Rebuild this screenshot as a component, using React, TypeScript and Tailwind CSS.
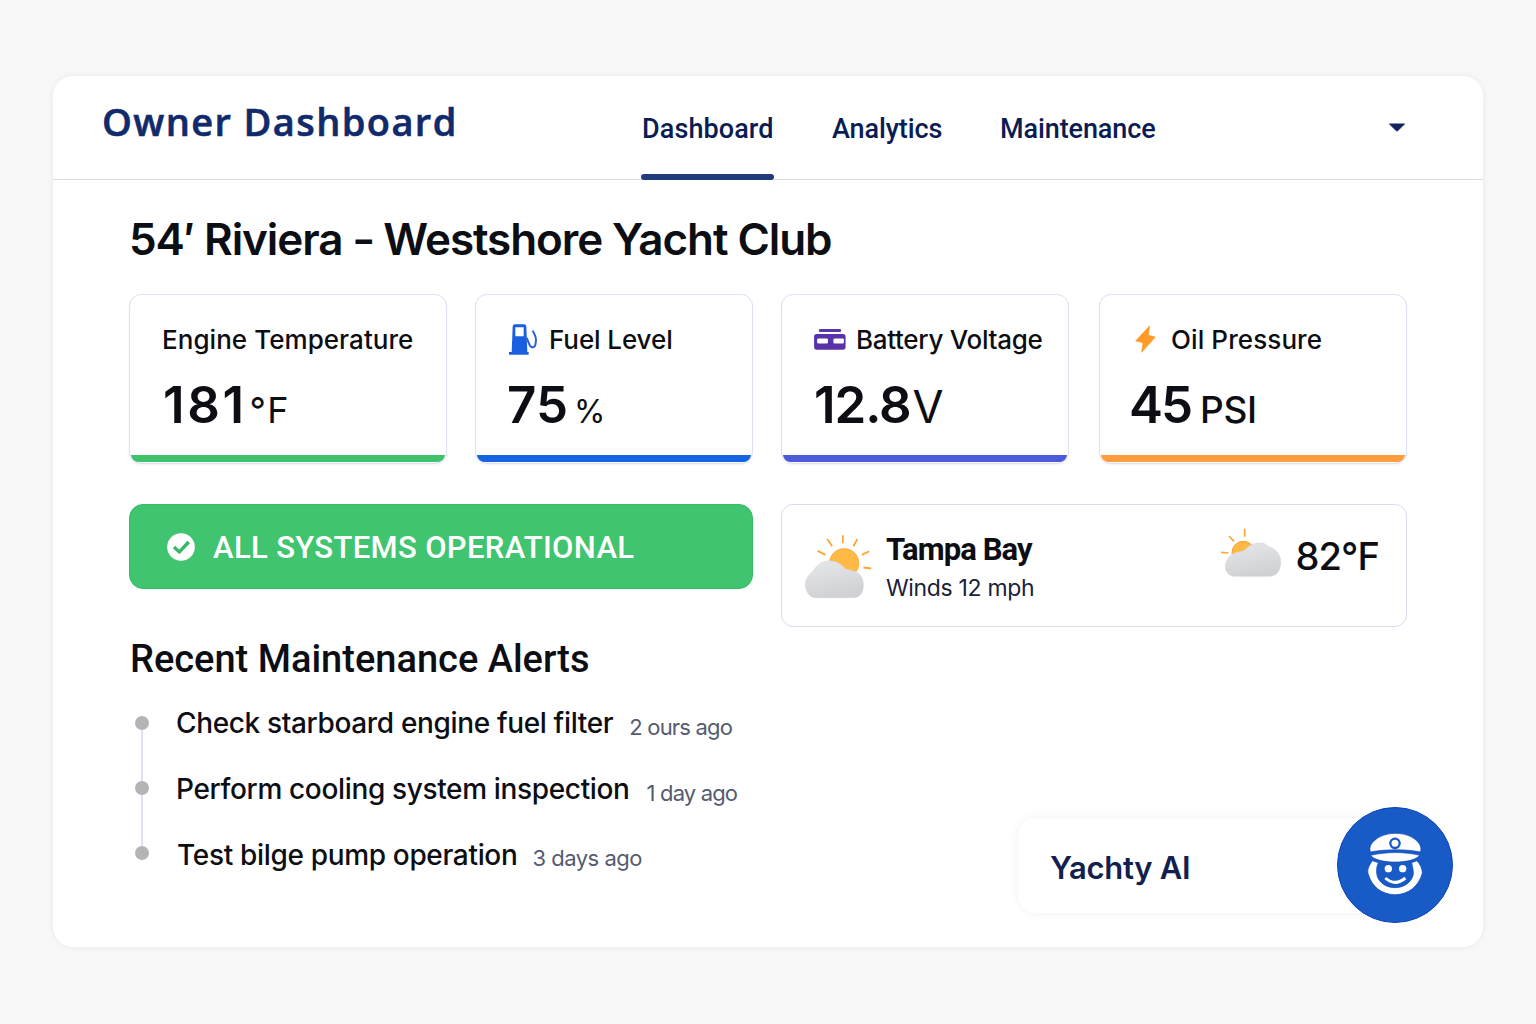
import React from "react";

const FuelIcon = () => (
  <svg className="h-[31px] w-7 shrink-0" viewBox="132 119 84 93" fill="none">
    <path fillRule="evenodd" fill="#1a5fdf" d="M143 127q0-7 7-7h27q7 0 7 7l3 76h4v8h-59v-8h8zM151 129v27h25v-27z" />
    <path d="M185 161C191 171 192 188 202 189C212 190 212 178 213 166C213 154 207 148 203 139" stroke="#2a63d8" strokeWidth="6" />
  </svg>
);

const BatteryIcon = () => (
  <svg className="h-[21px] w-8 shrink-0" viewBox="117 128 94 62">
    <rect x="131" y="128" width="66" height="9" rx="4" fill="#5636a8" />
    <path fillRule="evenodd" fill="#5931ab" d="M125 143h77q8 0 8 8v30q0 8-8 8h-77q-8 0-8-8v-30q0-8 8-8zM130 156q-4 0-4 4v7q0 4 4 4h24q4 0 4-4v-7q0-4-4-4zM178 156q-4 0-4 4v7q0 4 4 4h23q4 0 4-4v-7q0-4-4-4z" />
  </svg>
);

const BoltIcon = () => (
  <svg className="h-7 w-[21px] shrink-0" viewBox="134 121 63 84">
    <path fill="#ff9a26" stroke="#ff9a26" strokeWidth="2" strokeLinejoin="round" d="M178 123L136 169L158 174L154 203L195 157L174 152Z" />
  </svg>
);

const CloudGradient = ({ id }: { id: string }) => (
  <defs>
    <linearGradient id={id} x1="0.3" y1="0" x2="0.6" y2="1">
      <stop offset="0" stopColor="#e5e6e8" />
      <stop offset="1" stopColor="#cfd0d3" />
    </linearGradient>
  </defs>
);

const SunBehindCloud = () => (
  <svg className="h-[65px] w-[69px] shrink-0" viewBox="72 100 208 196">
    <CloudGradient id="cloudA" />
    <circle cx="193" cy="188" r="44.5" fill="#ffb947" stroke="#fba62c" strokeWidth="2" />
    <path d="M189 104v24M142 115l15 22M233 115l-12 22M113 151l24 12M269 152l-23 11M251 201l24 3" stroke="#fca635" strokeWidth="5.5" />
    <path fill="url(#cloudA)" stroke="#d2d3d7" strokeWidth="1.5" d="M108 292C88 292 76 272 76 252C76 232 90 222 100 210C115 190 130 181 150 181C172 181 185 193 195 203C205 210 225 208 238 220C248 230 251 243 251 255C251 277 240 292 220 292Z" />
  </svg>
);

const CloudWithSun = () => (
  <svg className="h-[50px] w-[62px] shrink-0" viewBox="120 82 186 150">
    <CloudGradient id="cloudB" />
    <circle cx="190" cy="156" r="34" fill="#ffb947" stroke="#fba02a" strokeWidth="3" />
    <path d="M194 84v24M147 106l15 16M123 155l22 2" stroke="#fca635" strokeWidth="5" />
    <path fill="url(#cloudB)" stroke="#cfd0d6" strokeWidth="1.5" d="M166 227C146 227 136 212 136 198C136 182 146 166 162 158C172 152 186 156 197 146C207 135 220 127 242 127C252 126 258 131 263 137C285 142 302 160 302 184C302 210 290 227 266 227Z" />
  </svg>
);

const CheckBadge = () => (
  <svg className="size-7 shrink-0" viewBox="0 0 84 84">
    <circle cx="42" cy="42" r="41.5" fill="#fff" />
    <path d="M21 42l16 15 28-30" fill="none" stroke="#36b866" strokeWidth="10" />
  </svg>
);

const CaptainIcon = () => (
  <svg className="size-[116px]" viewBox="51 36 348 348">
    <circle cx="225" cy="210" r="172.5" fill="#195bc6" stroke="#0d43bd" strokeWidth="3" />
    <g fill="#fff" stroke="#0d47bd" strokeWidth="2">
      <path d="M151 171Q147 160 152 151C165 128 195 115 226 115C260 115 289 129 300 150Q305 160 302 171C255 162 200 162 151 171Z" />
      <path d="M152 181C200 170 255 170 299 181C280 208 170 208 152 181Z" />
      <path d="M157 197C145 215 142 225 144 235C155 275 185 299 225 299C265 299 295 275 307 235C307 220 300 208 291 197L275 203C280 225 282 235 278 245C270 265 250 278 225 278C200 278 180 265 172 245C168 230 169 215 175 203Z" />
    </g>
    <circle cx="225" cy="145" r="14" fill="#fff" stroke="#195bc6" strokeWidth="7" />
    <circle cx="205" cy="221" r="11" fill="#fff" />
    <circle cx="248" cy="221" r="11" fill="#fff" />
    <path d="M196 249Q225 275 256 249" fill="none" stroke="#fff" strokeWidth="9" />
  </svg>
);

type MetricProps = {
  label: string;
  labelClass: string;
  value: string;
  valueClass: string;
  unit: string;
  unitClass: string;
  cardClass: string;
  barClass: string;
  icon?: React.ReactNode;
};

const Metric = ({ label, labelClass, value, valueClass, unit, unitClass, cardClass, barClass, icon }: MetricProps) => (
  <section className={`flex h-[170px] shrink-0 flex-col overflow-hidden rounded-xl border border-[#dde1f2] bg-white px-px pb-px shadow-[0_1px_2px_rgba(30,40,90,0.06)] ${cardClass}`}>
    <div className="mt-7 flex h-8 items-center whitespace-nowrap">
      {icon}
      <h2 className={`relative top-px text-[26px] leading-8 font-medium ${labelClass}`}>{label}</h2>
    </div>
    <div className="mt-5 flex h-[60px] items-baseline whitespace-nowrap">
      <span className={`text-[51px] leading-[60px] font-semibold ${valueClass}`}>{value}</span>
      <span className={`leading-10 ${unitClass}`}>{unit}</span>
    </div>
    <div className={`mt-auto h-[7px] shrink-0 rounded-b-[10px] ${barClass}`} />
  </section>
);

const alerts = [
  { text: "Check starboard engine fuel filter", time: "2 ours ago", dotClass: "mt-[16px]", textClass: "ml-[27px] tracking-[-0.35px]", timeClass: "mt-[12px] ml-4 tracking-[-0.8px]" },
  { text: "Perform cooling system inspection", time: "1 day ago", dotClass: "mt-[15px]", textClass: "ml-[27px] tracking-[-0.35px]", timeClass: "mt-[12px] ml-[17px] tracking-[-0.85px]" },
  { text: "Test bilge pump operation", time: "3 days ago", dotClass: "mt-[14px]", textClass: "ml-7 tracking-[-0.33px]", timeClass: "mt-[11px] ml-[15px] tracking-[-0.5px]" },
];

export default function App() {
  return (
    <div className="h-[1024px] w-[1536px] overflow-hidden bg-[#f8f8f8] pt-[76px] pl-[53px] font-['Inter',sans-serif] text-[#0c0e14]">
      <main className="flex h-[871px] w-[1430px] flex-col rounded-[20px] bg-white shadow-[0_0_6px_rgba(0,0,0,0.07)]">
        <header className="flex h-[104px] shrink-0 border-b border-[#d3dbe6] pl-12">
          <h1 className="mt-5 w-[540px] pl-px text-[38px] leading-[50px] font-semibold tracking-[1.4px] text-[#112a6c] font-['Open_Sans',sans-serif] [-webkit-text-stroke:0.6px_#112a6c]">Owner Dashboard</h1>
          <nav className="flex h-[104px] font-['Roboto',sans-serif] text-[27px] leading-[36px] font-medium text-[#0b1c53]">
            <a className="relative h-[104px] w-[133px] pt-[35px] pl-px tracking-[0.1px]">
              Dashboard
              <span className="absolute bottom-0 left-0 h-[6px] w-[133px] rounded-full bg-[#203b7b]" />
            </a>
            <a className="ml-[58px] w-[112px] pt-[35px] tracking-[-0.1px]">Analytics</a>
            <a className="ml-[56px] pt-[35px] tracking-[-0.1px]">Maintenance</a>
          </nav>
          <svg className="mt-[47px] mr-[77px] ml-auto h-[9px] w-[18px]" viewBox="0 0 18 9">
            <path d="M1.5 1H16.5L9.8 7.6Q9 8.2 8.2 7.6Z" fill="#12235c" stroke="#12235c" strokeWidth="1" strokeLinejoin="round" />
          </svg>
        </header>

        <div className="flex flex-1 flex-col pl-[76px]">
          <h2 className="mt-[33px] mb-px text-[44px] leading-[52px] font-semibold tracking-[-1.08px] whitespace-nowrap">
            54′ Riviera <span className="mr-[-1px] ml-[1px] inline-block scale-x-[0.75]">–</span> Westshore Yacht Club
          </h2>

          <div className="mt-[28px] flex">
            <Metric label="Engine Temperature" labelClass="ml-[31px] tracking-[0.05px]" value="181" valueClass="ml-[32px] tracking-[2.6px]" unit="°F" unitClass="ml-[3px] text-[36px] tracking-[1.2px]" cardClass="w-[318px]" barClass="bg-[#3fc26c]" />
            <Metric label="Fuel Level" labelClass="ml-[12px] tracking-[-0.1px]" value="75" valueClass="ml-[30px]" unit="%" unitClass="ml-[6px] text-[32px]" cardClass="ml-[28px] w-[278px]" barClass="bg-[#1664e3]" icon={<span className="ml-8"><FuelIcon /></span>} />
            <Metric label="Battery Voltage" labelClass="ml-[10px] tracking-[-0.3px]" value="12.8" valueClass="ml-[31px] tracking-[-1.1px]" unit="V" unitClass="ml-[2px] text-[45px]" cardClass="ml-[28px] w-[288px]" barClass="bg-[#4c5bd8]" icon={<span className="ml-[31px]"><BatteryIcon /></span>} />
            <Metric label="Oil Pressure" labelClass="ml-[15px] tracking-[0.1px]" value="45" valueClass="ml-[28px] tracking-[-2px]" unit="PSI" unitClass="ml-[9px] text-[37px] font-medium tracking-[-0.4px]" cardClass="ml-[30px] w-[308px]" barClass="bg-[#ff9d3c]" icon={<span className="ml-[34px]"><BoltIcon /></span>} />
          </div>

          <div className="mt-[40px] flex h-[123px] items-start">
            <div className="flex h-[85px] w-[624px] items-center rounded-[14px] border border-[#34bd66] bg-[#40c470] pl-[37px] text-white">
              <CheckBadge />
              <span className="mt-[2px] ml-[18px] font-['Roboto',sans-serif] text-[31px] leading-[40px] font-medium tracking-[0.35px] whitespace-nowrap">ALL SYSTEMS OPERATIONAL</span>
            </div>
            <section className="ml-[28px] flex h-[123px] w-[626px] items-start rounded-xl border border-[#d9ddef] bg-white pl-[22px] whitespace-nowrap">
              <div className="mt-[29px]"><SunBehindCloud /></div>
              <div className="mt-[25px] ml-[13px]">
                <h3 className="pt-px font-['Roboto',sans-serif] text-[31px] leading-[38px] font-bold tracking-[-0.9px]">Tampa Bay</h3>
                <p className="mt-[4px] text-[23px] leading-[30px] tracking-[-0.33px] text-[#1b2138]">Winds 12 mph</p>
              </div>
              <div className="mt-[23px] mr-[27px] ml-auto flex">
                <CloudWithSun />
                <span className="mt-[3px] ml-[14px] text-[38px] leading-[50px] font-medium tracking-[-0.9px]">82°F</span>
              </div>
            </section>
          </div>

          <div className="flex">
            <section className="w-[889px]">
              <h2 className="mt-[8px] ml-px pt-px font-['Roboto',sans-serif] text-[38px] leading-[46px] font-medium whitespace-nowrap">Recent Maintenance Alerts</h2>
              <ul className="relative mt-[18px]">
                <span className="absolute top-[30px] left-[12px] h-[116px] w-[2px] bg-[#dfe2ee]" />
                {alerts.map((a) => (
                  <li key={a.text} className="relative flex h-[66px] items-start pl-[6px] whitespace-nowrap">
                    <span className={`size-[14px] shrink-0 rounded-full bg-[#b3b4b6] ${a.dotClass}`} />
                    <span className={`mt-[5px] text-[28px] leading-[36px] font-medium ${a.textClass}`}>{a.text}</span>
                    <span className={`text-[22px] leading-[30px] text-[#555b70] ${a.timeClass}`}>{a.time}</span>
                  </li>
                ))}
              </ul>
            </section>
            <aside className="mt-[191px] flex h-[95px] w-[377px] items-center rounded-[18px] bg-white pl-[32px] shadow-[0_0_10px_rgba(0,0,0,0.06)]">
              <span className="w-[287px] shrink-0 pt-[4px] text-[31px] leading-[40px] font-semibold tracking-[-0.28px] whitespace-nowrap text-[#131f4f]">Yachty AI</span>
              <button className="mb-[2px] shrink-0"><CaptainIcon /></button>
            </aside>
          </div>
        </div>
      </main>
    </div>
  );
}
